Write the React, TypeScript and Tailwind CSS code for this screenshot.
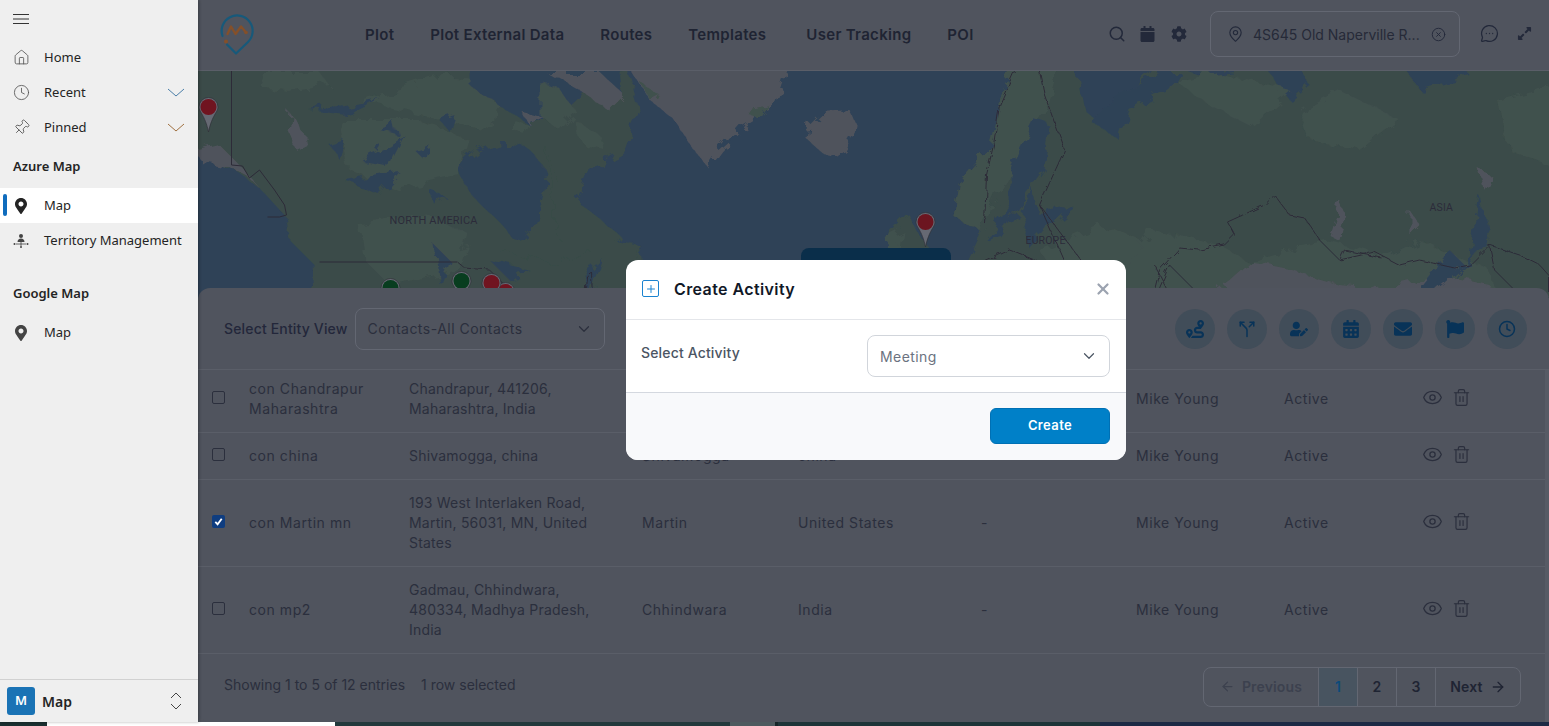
import { ArrowLeft, ArrowRight, ChevronDown, CircleX, Clock, Eye, Home, MapPin, MessageCircleMore, Pin, Plus, Search, Split, Trash2, X } from 'lucide-react';
import { FaCalendar, FaCalendarAlt, FaCog, FaEnvelope, FaExpandAlt, FaFlag, FaMapMarkerAlt, FaRoute, FaUserEdit } from 'react-icons/fa';

const navLinks = [
  { label: 'Plot', width: '' },
  { label: 'Plot External Data', width: '' },
  { label: 'Routes', width: '' },
  { label: 'Templates', width: 'min-w-[82px]' },
  { label: 'User Tracking', width: '' },
  { label: 'POI', width: '' },
];

const rows = [
  { lines: ['con Chandrapur', 'Maharashtra'], address: ['Chandrapur, 441206,', 'Maharashtra, India'], city: 'Chandrapur', country: 'India', checked: false },
  { lines: ['con china'], address: ['Shivamogga, china'], city: 'Shivamogga', country: 'china', checked: false },
  { lines: ['con Martin mn'], address: ['193 West Interlaken Road,', 'Martin, 56031, MN, United', 'States'], city: 'Martin', country: 'United States', checked: true },
  { lines: ['con mp2'], address: ['Gadmau, Chhindwara,', '480334, Madhya Pradesh,', 'India'], city: 'Chhindwara', country: 'India', checked: false },
];

const actions = [FaRoute, Split, FaUserEdit, FaCalendarAlt, FaEnvelope, FaFlag, Clock];

function TerritoryIcon() {
  return (
    <svg viewBox="0 0 16 16" className="w-4 h-4 text-[#444]" fill="currentColor">
      <circle cx="8" cy="3" r="2" />
      <path d="M4.500 9c0-2.200 1.500-3.400 3.500-3.400s3.500 1.200 3.500 3.400z" />
      <path d="M8 9v4M3 11h10" stroke="currentColor" strokeWidth="0.8" />
      <circle cx="1.500" cy="11" r="1" />
      <circle cx="14.500" cy="11" r="1" />
      <circle cx="8" cy="14" r="1" />
    </svg>
  );
}

function Logo() {
  return (
    <svg viewBox="216 12 38 44" className="w-[38px] h-[44px]" fill="none" strokeLinecap="round" strokeLinejoin="round">
      <path d="M221.500 35 A15.500 15.500 0 1 1 247 41 L235 52.500 L226 43.500" stroke="#17597a" strokeWidth="2.200" />
      <path d="M226.500 33 L230 25.500 L234.500 33 L240 25.500 L245 31.500" stroke="#84502a" strokeWidth="2.400" />
      <circle cx="225" cy="40.500" r="2" fill="#84502a" />
      <circle cx="245" cy="31.500" r="1.800" fill="#84502a" />
    </svg>
  );
}

function MapMarker({ x, y, fill }: { x: number; y: number; fill: string }) {
  return (
    <g>
      <path d={`M${x - 9.5} ${y} a9.5 9.5 0 0 1 19 0 c0 5 -6 8 -9.5 25 c-3.5 -17 -9.5 -20 -9.5 -25z`} fill="#666973" stroke="#2f3038" strokeWidth="0.7" />
      <circle cx={x} cy={y} r="8" fill={fill} />
    </g>
  );
}

function MapView() {
  return (
    <div className="relative h-[229px] shrink-0 overflow-hidden bg-[#2f4257]">
      <svg viewBox="199 71 1350 229" className="w-full h-full block">
        <defs>
          <filter id="coast" x="0" y="0" width="100%" height="100%">
            <feTurbulence type="fractalNoise" baseFrequency="0.07" numOctaves="3" seed="4" />
            <feDisplacementMap in="SourceGraphic" scale="16" />
          </filter>
          <filter id="border" x="0" y="0" width="100%" height="100%">
            <feTurbulence type="fractalNoise" baseFrequency="0.12" numOctaves="2" seed="9" />
            <feDisplacementMap in="SourceGraphic" scale="6" />
          </filter>
        </defs>
        <g filter="url(#coast)">
          {/* north america */}
          <path d="M190 60H625L640 110L625 150L590 170L575 205L590 235L640 245L650 310H315L312 262L290 240L285 215L262 190L235 170L190 152Z" fill="#3a4c48" />
          <path d="M199 150L220 145L240 165L262 190L250 178L225 165L199 160Z" fill="#50535c" />
          <path d="M290 112L305 135L307 145L297 150L288 130Z" fill="#50535c" />
          <path d="M260 72H320L330 85L290 92L265 90Z" fill="#41514e" />
          <path d="M340 120H420L470 140L460 175L400 190L350 170Z" fill="#41514e" />
          <path d="M360 225L430 215L470 235L460 270L390 285L365 260Z" fill="#41514e" />
          <path d="M360 100L440 75L500 80L495 130L420 115Z" fill="#41514e" />
          <path d="M346 115L380 98L345 105L310 110ZM370 155L405 135L390 165L362 160ZM345 180L400 172L380 195ZM430 190L445 195L435 205ZM435 245L450 260L440 285ZM380 130L395 122L398 135ZM415 150L430 145L425 160ZM330 145L345 140L340 160ZM440 120L455 115L450 132Z" fill="#2f4257" />
          <path d="M460 171C470 145 510 135 530 150C550 165 548 190 540 205C535 235 520 250 510 235C500 215 470 205 460 171Z" fill="#2f4257" />
          <path d="M470 60H620L625 95L585 90L560 115L530 125L500 105L470 85Z" fill="#2f4257" />
          <path d="M540 82L560 88L575 110L560 130L540 115ZM572 118L600 135L605 150L585 145ZM515 120L530 125L525 135L512 130Z" fill="#41514e" />
          <path d="M545 145L560 185L570 195L620 235L600 260L575 255L560 240L555 215Z" fill="#3a4c48" />
          <path d="M547 72H600L625 95L610 110L580 90ZM523 112L545 118L530 125Z" fill="#50535c" />
          <path d="M500 250L560 265L590 250L640 250L620 310H500Z" fill="#3a4c48" />
          <path d="M585 275L605 260L590 300ZM490 260L530 270L510 280Z" fill="#2f4257" />
          {/* greenland */}
          <path d="M625 60H790L775 105L742 125L720 150L708 167L695 150L675 120L650 100Z" fill="#50535c" />
          <path d="M640 82L660 95L650 100ZM745 110L770 105L760 120Z" fill="#41514e" />
          {/* iceland */}
          <path d="M810 125L823 112L850 110L858 128L845 150L833 158L820 150L808 140Z" fill="#50535c" />
          {/* uk and ireland */}
          <path d="M900 230L910 215L893 232L878 290H900L905 280L915 260L935 310H945L930 250L918 232L910 215Z" fill="#3a4c48" />
          <path d="M893 235L903 230L900 250L885 268L878 262Z" fill="#41514e" />
          {/* eurasia */}
          <path d="M1015 60L1000 105L990 145L960 180L953 215L982 232L968 262L962 295L950 310H1560V60H1300L1200 75L1155 60L1130 95L1120 140L1085 110L1075 60Z" fill="#3a4c48" />
          <path d="M1015 60L1000 105L990 145L960 180L953 215L982 232L1000 190L1030 145L1045 110L1060 60Z" fill="#41514e" />
          <path d="M1010 170L1035 120L1050 125L1045 170L1020 205L1000 235L985 240L1010 210Z" fill="#2f4257" />
          <path d="M1020 210L1035 190L1040 215L1060 205L1075 208L1050 225L1030 250Z" fill="#2f4257" />
          <path d="M1090 120L1120 95L1160 71H1180L1170 90L1130 110L1120 140Z" fill="#2f4257" />
          <path d="M1260 60L1290 100L1310 85L1300 60ZM1400 60L1420 90L1470 75L1460 60Z" fill="#2f4257" />
          <path d="M1175 80L1220 72L1290 90L1250 125L1210 105ZM1300 110L1340 90L1400 120L1360 150L1310 140ZM1500 100L1560 85V170L1510 150ZM1040 250L1100 225L1150 245L1120 290L1060 280Z" fill="#41514e" />
          <path d="M1150 230L1220 245L1250 262L1330 240L1390 255L1420 240L1490 270L1500 310H1100Z" fill="#41514e" />
          <path d="M1250 262L1290 270L1340 285L1380 290L1440 275L1490 285L1500 310H1190L1230 280Z" fill="#50535c" />
          <path d="M1450 250L1465 265L1425 300H1410Z" fill="#2f4257" />
          <path d="M1340 200L1347 215L1340 240L1330 235ZM1410 210L1420 225L1410 235ZM1480 170L1492 175L1485 190Z" fill="#50535c" />
          <path d="M1480 195L1470 255L1455 280L1490 240Z" fill="#2f4257" />
        </g>
        {/* borders */}
        <path d="M232 71V165L243 166L250 178L260 170L275 190L285 205L287 215L280 217H268" fill="none" stroke="#2d2b38" strokeWidth="1" />
        <path d="M320 262L458 262" fill="none" stroke="#2d2b38" strokeWidth="1" />
        <g fill="none" stroke="#2d2b38" strokeWidth="1" strokeLinejoin="round" filter="url(#border)">
          <path d="M458 262L465 268L490 270L505 285L515 295" />
          <path d="M585 300L587 276L592 272L593 300" />
          <path d="M1015 71L1000 105L994 145L987 175L985 225" />
          <path d="M1040 71L1045 95L1065 150L1040 205L1065 262L1085 265L1105 295" />
          <path d="M985 262L1010 250L1040 262L1030 300" />
          <path d="M1025 262L1045 265L1065 262M1040 205L1055 225L1085 265M990 262L1000 285L1020 300" />
          <path d="M1155 265L1182 316M1157 295L1170 265L1225 320" />
          <path d="M1155 290L1160 270L1180 248L1200 250L1225 245L1235 235L1228 222L1265 205L1275 195L1290 215L1305 218L1310 225L1320 240L1340 260L1375 252L1400 265L1420 260L1455 268L1470 265L1490 245L1520 255L1540 265L1549 275" />
          <path d="M1340 260L1345 250L1382 258M1490 245L1495 270L1520 295M1549 275V300" />
        </g>
        {/* labels */}
        <g fill="#2c2b3a" fontFamily="Roboto, sans-serif" fontSize="11">
          <text x="390" y="224">NORTH AMERICA</text>
          <text x="1026" y="244" fontSize="10.5">EUROPE</text>
          <text x="1430" y="211" fontSize="10.5">ASIA</text>
        </g>
        <MapMarker x={209} y={107} fill="#701420" />
        <MapMarker x={926} y={222} fill="#6c1520" />
        <MapMarker x={391} y={288} fill="#083d1f" />
        <MapMarker x={462} y={281} fill="#083d1f" />
        <MapMarker x={506} y={292} fill="#701420" />
        <MapMarker x={492} y={283} fill="#701420" />
      </svg>
      <div className="absolute left-[603px] top-[177px] w-[150px] h-[52px] rounded-t-lg bg-[#0a2e4a]" />
    </div>
  );
}

function SideChevron({ color }: { color: string }) {
  return (
    <svg viewBox="0 0 18 9" className={`w-[18px] h-[9px] ml-auto mr-[13px] ${color}`} fill="none" stroke="currentColor" strokeWidth="1">
      <path d="M1 1L9 8L17 1" />
    </svg>
  );
}

function Sidebar() {
  const rowClass = 'flex items-center h-[35px] pl-[13px] text-[#242424]';
  return (
    <aside className="w-[198px] shrink-0 h-full flex flex-col bg-[#efefef] shadow-[1px_0_3px_rgba(0,0,0,0.3)] font-['Noto_Sans',sans-serif] text-[13px] tracking-normal z-10">
      <div className="h-10 pl-[13px] pt-[14px]">
        <svg viewBox="0 0 16 10" className="w-4 h-[10px] text-[#333]" fill="none" stroke="currentColor" strokeWidth="1">
          <path d="M0 .5H16M0 5H16M0 9.500H16" />
        </svg>
      </div>
      <div className={rowClass}>
        <Home className="w-[17px] h-[17px] mr-[14px] text-[#555]" strokeWidth={1.2} />Home
      </div>
      <div className={rowClass}>
        <Clock className="w-[17px] h-[17px] mr-[14px] text-[#555]" strokeWidth={1.2} />Recent
        <SideChevron color="text-[#4a7ea8]" />
      </div>
      <div className={rowClass}>
        <Pin className="w-[17px] h-[17px] mr-[14px] rotate-45 text-[#555]" strokeWidth={1.2} />Pinned
        <SideChevron color="text-[#a0703f]" />
      </div>
      <div className="h-[43px] pl-[13px] flex items-center font-semibold text-[#242424]">Azure Map</div>
      <div className="relative flex items-center h-[35px] pl-[14px] bg-white text-[#242424]">
        <span className="absolute left-[3px] top-[6px] w-1 h-[22px] bg-[#0f6cbd] rounded-sm" />
        <FaMapMarkerAlt className="w-[14px] h-[16px] mr-[16px] text-[#242424]" />Map
      </div>
      <div className={rowClass}>
        <span className="mr-[15px]"><TerritoryIcon /></span>Territory Management
      </div>
      <div className="h-[57px] pl-[13px] pt-[15px] flex items-center font-semibold text-[#242424]">Google Map</div>
      <div className="flex items-center h-[35px] pl-[14px] text-[#242424]">
        <FaMapMarkerAlt className="w-[14px] h-[16px] mr-[16px] text-[#444]" />Map
      </div>
      <div className="mt-auto h-[43px] border-t border-[#d1d1d1] flex items-center pl-[7px] pr-[16px]">
        <span className="w-7 h-7 rounded-[3px] bg-[#1a73b5] text-white font-semibold flex items-center justify-center">M</span>
        <span className="ml-[7px] font-semibold text-[14px] text-[#242424]">Map</span>
        <svg viewBox="0 0 12 20" className="ml-auto w-3 h-5 text-[#444]" fill="none" stroke="currentColor" strokeWidth="1">
          <path d="M1 7L6 2L11 7M1 13L6 18L11 13" />
        </svg>
      </div>
    </aside>
  );
}

function Header() {
  return (
    <header className="h-[71px] shrink-0 flex items-center pl-[19px] border-b border-[#5a5e68]">
      <Logo />
      <nav className="flex items-center gap-9 ml-[110px] text-[15px] font-semibold tracking-[0.02em] text-[#1f2433]">
        {navLinks.map((link) => (
          <span key={link.label} className={link.width}>{link.label}</span>
        ))}
      </nav>
      <div className="ml-auto -mt-[3px] flex items-center text-[#23293a]">
        <Search className="w-[18px] h-[18px] mr-[14px]" strokeWidth={2} />
        <FaCalendar className="w-[15px] h-[16px] mr-[16px]" />
        <FaCog className="w-[16px] h-[16px] mr-[23px]" />
        <div className="w-[250px] h-[46px] mt-[1px] rounded-lg border border-[#636772] flex items-center pl-[16px] pr-[13px] text-[14px] font-normal">
          <MapPin className="w-[17px] h-[18px] mr-[9px] shrink-0" strokeWidth={1.6} />
          <span className="flex-1 whitespace-nowrap tracking-normal text-[#262a38]">4S645 Old Naperville R...</span>
          <CircleX className="w-[15px] h-[15px] ml-1 shrink-0" strokeWidth={1.5} />
        </div>
        <MessageCircleMore className="w-[19px] h-[19px] ml-[20px]" strokeWidth={1.6} />
        <FaExpandAlt className="w-[15px] h-[15px] ml-[18px] mr-[17px]" />
      </div>
    </header>
  );
}

function Panel() {
  return (
    <section className="relative -mt-3 h-[434px] shrink-0 rounded-t-xl rounded-bl-xl bg-[#50545e] flex flex-col text-[14px] text-[#2b2f3d]">
      <div className="h-[82px] shrink-0 flex items-center pl-[26px] pr-[22px] border-b border-[#5a5e68]">
        <span className="font-medium text-[#23273a] mr-[7px]">Select Entity View</span>
        <div className="w-[250px] h-[42px] rounded-lg border border-[#636772] flex items-center pl-3 pr-[11px]">
          <span className="flex-1 tracking-[0.035em]">Contacts-All Contacts</span>
          <ChevronDown className="w-[18px] h-[18px]" strokeWidth={1.6} />
        </div>
        <div className="ml-auto flex gap-3">
          {actions.map((Icon, i) => (
            <span key={i} className="w-10 h-10 rounded-full bg-[#414d59] flex items-center justify-center text-[#083358]">
              <Icon className="w-[18px] h-[18px]" />
            </span>
          ))}
        </div>
      </div>
      <div className="flex-1 min-h-0 flex">
        <div className="flex-1 min-w-0 overflow-hidden">
          {rows.map((row, i) => (
            <div key={row.lines[0]} className={`grid grid-cols-[37px_160px_233px_156px_183px_155px_148px_140px_1fr] items-center pl-[14px] py-[13px] leading-5 tracking-[0.04em] border-b border-[#5a5e68] last:border-b-0 ${i === 0 ? '-mt-1' : ''}`}>
              <span className={`w-[13px] h-[13px] -mt-1 rounded-[2px] flex items-center justify-center ${row.checked ? 'bg-[#0f3d80]' : 'border border-[#2b2f3d]'}`}>
                {row.checked && (
                  <svg viewBox="0 0 12 12" className="w-[11px] h-[11px]" fill="none" stroke="white" strokeWidth="2"><path d="M2.500 6.500L5 9L9.500 3" /></svg>
                )}
              </span>
              <span>{row.lines.map((l) => <div key={l}>{l}</div>)}</span>
              <span className="tracking-[0.015em]">{row.address.map((l) => <div key={l}>{l}</div>)}</span>
              <span>{row.city}</span>
              <span>{row.country}</span>
              <span>-</span>
              <span>Mike Young</span>
              <span>Active</span>
              <span className="flex items-center gap-[9px] -mt-1 -ml-[2px]">
                <Eye className="w-[21px] h-[21px]" strokeWidth={1.5} />
                <Trash2 className="w-[19px] h-[19px]" strokeWidth={1.5} />
              </span>
            </div>
          ))}
          <div className="flex items-center h-[65px] pl-[26px]">
            <span className="mr-4 pb-1 tracking-normal">Showing 1 to 5 of 12 entries</span>
            <span className="pb-1 tracking-normal">1 row selected</span>
            <div className="ml-auto mr-6 h-10 flex rounded-lg border border-[#636772] font-semibold overflow-hidden">
              <span className="w-[114px] flex items-center justify-center gap-[7px] text-[#3c414e]"><ArrowLeft className="w-[15px] h-[15px]" />Previous</span>
              <span className="w-10 flex items-center justify-center border-x border-[#636772] bg-[#485460] text-[#0c4a7a]">1</span>
              <span className="w-[39px] flex items-center justify-center border-r border-[#636772] text-[#1f2433]">2</span>
              <span className="w-[39px] flex items-center justify-center border-r border-[#636772] text-[#1f2433]">3</span>
              <span className="flex-1 w-[84px] flex items-center justify-center gap-[7px] text-[#1f2433]">Next<ArrowRight className="w-[16px] h-[16px]" /></span>
            </div>
          </div>
        </div>
        <div className="w-1 shrink-0 bg-[#575b65]" />
      </div>
    </section>
  );
}

function ActivityDialog() {
  return (
    <div className="absolute left-[428px] top-[260px] w-[500px] h-[200px] rounded-xl bg-white overflow-hidden flex flex-col text-[14px] z-20">
      <div className="h-[60px] shrink-0 flex items-center pl-4 pr-[14px] pb-[2px] border-b border-[#e4e6ea]">
        <span className="w-[17px] h-[17px] rounded-[2px] border-[1.5px] border-[#1a83d0] flex items-center justify-center">
          <Plus className="w-[12px] h-[12px] text-[#1a83d0]" strokeWidth={2} />
        </span>
        <span className="ml-[15px] text-[16px] font-semibold tracking-[0.025em] text-[#111827]">Create Activity</span>
        <X className="ml-auto w-[18px] h-[18px] text-[#9ca3b0]" strokeWidth={3} />
      </div>
      <div className="h-[73px] shrink-0 flex pl-[15px] pr-4 pt-[15px] border-b border-[#d4d8df]">
        <span className="w-[226px] pt-[7px] font-medium text-[#4b5563]">Select Activity</span>
        <div className="w-[243px] h-[42px] rounded-lg border border-[#d1d5db] flex items-center pl-3 pr-[11px] text-[#6b7280]">
          <span className="flex-1 tracking-[0.03em]">Meeting</span>
          <ChevronDown className="w-[18px] h-[18px] text-[#4b5563]" strokeWidth={1.6} />
        </div>
      </div>
      <div className="flex-1 bg-[#f8f9fb] flex items-start justify-end pt-[15px] pr-4">
        <button className="w-[120px] h-9 rounded-md bg-[#0080c8] border border-[#0070b4] text-white text-[13px] font-semibold tracking-[0.03em]">Create</button>
      </div>
    </div>
  );
}

export default function App() {
  return (
    <div className="w-full h-screen flex flex-col overflow-hidden bg-[#1d3438] font-['Inter',sans-serif] tracking-[0.01em]">
      <div className="h-[722px] shrink-0 flex">
        <Sidebar />
        <main className="relative flex-1 min-w-0 flex flex-col bg-[#50545e]">
          <Header />
          <MapView />
          <Panel />
          <ActivityDialog />
        </main>
      </div>
      <div className="h-1 flex">
        <span className="w-[47px] bg-[#1a2f30]" />
        <span className="w-[288px] bg-white" />
        <span className="w-[395px] bg-[#22393c]" />
        <span className="w-[45px] bg-[#4d5a5f]" />
        <span className="w-[3px] bg-[#162528]" />
        <span className="w-[322px] bg-[#1d3438]" />
        <span className="flex-1 bg-[#1c2a45]" />
      </div>
    </div>
  );
}
